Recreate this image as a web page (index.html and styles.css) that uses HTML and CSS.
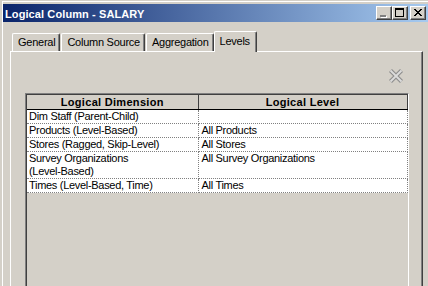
FILE: index.html
```html
<!DOCTYPE html>
<html>
<head>
<meta charset="utf-8">
<title>Logical Column - SALARY</title>
<link rel="stylesheet" href="styles.css">
</head>
<body>
<div class="window">
  <div class="titlebar">
    <span class="title">Logical Column - SALARY</span>
    <div class="caption-buttons">
      <span class="cbtn"><svg width="14" height="12" viewBox="0 0 14 12" shape-rendering="crispEdges"><rect x="4" y="9" width="6" height="2" fill="#fff"/><rect x="3" y="8" width="6" height="2" fill="#808080"/></svg></span>
      <span class="cbtn"><svg width="14" height="12" viewBox="0 0 14 12" shape-rendering="crispEdges"><rect x="2" y="1" width="9" height="2" fill="#000"/><rect x="2" y="1" width="1" height="9" fill="#000"/><rect x="10" y="1" width="1" height="9" fill="#000"/><rect x="2" y="9" width="9" height="1" fill="#000"/></svg></span>
      <span class="cbtn close"><svg width="14" height="12" viewBox="0 0 14 12" shape-rendering="crispEdges"><g fill="#000"><rect x="3" y="2" width="2" height="1"/><rect x="9" y="2" width="2" height="1"/><rect x="4" y="3" width="2" height="1"/><rect x="8" y="3" width="2" height="1"/><rect x="5" y="4" width="4" height="1"/><rect x="6" y="5" width="2" height="1"/><rect x="5" y="6" width="4" height="1"/><rect x="4" y="7" width="2" height="1"/><rect x="8" y="7" width="2" height="1"/><rect x="3" y="8" width="2" height="1"/><rect x="9" y="8" width="2" height="1"/></g></svg></span>
    </div>
  </div>
  <div class="content">
    <div class="tabs">
      <div class="tab">General</div>
      <div class="tab">Column Source</div>
      <div class="tab">Aggregation</div>
      <div class="tab active">Levels</div>
    </div>
    <div class="panel">
      <div class="toolbar">
        <svg class="delete-icon" width="16" height="16" viewBox="0 0 16 16"><path d="M2.5 2.5 L13.5 13.5 M13.5 2.5 L2.5 13.5" stroke="#8e8e8e" stroke-width="4.2"/><path d="M2.5 2.5 L13.5 13.5 M13.5 2.5 L2.5 13.5" stroke="#dcdcdc" stroke-width="1.8"/></svg>
      </div>
      <div class="frame">
        <table class="grid">
          <colgroup><col class="c1"><col class="c2"></colgroup>
          <thead>
            <tr><th>Logical Dimension</th><th>Logical Level</th></tr>
          </thead>
          <tbody>
            <tr><td>Dim Staff (Parent-Child)</td><td></td></tr>
            <tr><td>Products (Level-Based)</td><td>All Products</td></tr>
            <tr><td>Stores (Ragged, Skip-Level)</td><td>All Stores</td></tr>
            <tr><td>Survey Organizations <span class="nobr">(Level-Based)</span></td><td>All Survey Organizations</td></tr>
            <tr><td>Times (Level-Based, Time)</td><td>All Times</td></tr>
          </tbody>
        </table>
      </div>
    </div>
  </div>
</div>
</body>
</html>
```
FILE: styles.css
```css
html, body {
  margin: 0;
  padding: 0;
}
body {
  width: 428px;
  height: 286px;
  overflow: hidden;
  background: #d4d0c8;
  font-family: "Liberation Sans", Arial, sans-serif;
  font-size: 11px;
  color: #000;
}
.window {
  margin: 1px 0 0 2px;
  border-top: 1px solid #fff;
  border-left: 1px solid #fff;
  padding-top: 2px;
}
.titlebar {
  height: 18px;
  display: flex;
  align-items: center;
  padding: 0 2px 0 2px;
  background: linear-gradient(to right, #0a246a 0%, #a6caf0 100%);
}
.title {
  align-self: flex-start;
  color: #fff;
  font-weight: bold;
  font-size: 11px;
  line-height: 16px;
  padding-top: 2px;
  letter-spacing: 0.1px;
  white-space: nowrap;
}
.caption-buttons {
  margin-left: auto;
  display: flex;
}
.cbtn {
  width: 16px;
  height: 14px;
  box-sizing: border-box;
  background: #d4d0c8;
  border: 1px solid;
  border-color: #fff #404040 #404040 #fff;
  box-shadow: inset -1px -1px #808080;
}
.cbtn svg {
  display: block;
}
.cbtn.close {
  margin-left: 2px;
}
.content {
  padding: 9px 0 0 7px;
}
.tabs {
  display: flex;
  align-items: flex-end;
  padding-left: 2px;
  height: 20px;
}
.tab {
  border-top: 1px solid #fff;
  border-left: 1px solid #fff;
  border-right: 1px solid #404040;
  box-shadow: inset -1px 0 #808080;
  border-radius: 2px 2px 0 0;
  padding: 2px 4px 2px 5px;
  line-height: 13px;
  margin-right: 1px;
  letter-spacing: -0.25px;
  white-space: nowrap;
}
.tab.active {
  position: relative;
  z-index: 1;
  background: #d4d0c8;
  padding: 3px 6px 4px 5px;
  margin-bottom: -1px;
  margin-left: -1px;
  margin-right: 0;
}
.panel {
  border-top: 1px solid #fff;
  border-left: 1px solid #fff;
  border-right: 1px solid #404040;
  box-shadow: inset -1px 0 #808080;
  margin-right: 5px;
  height: 234px;
}
.toolbar {
  display: flex;
  justify-content: flex-end;
  padding: 16px 18px 9px 0;
}
.delete-icon {
  display: block;
}
.frame {
  margin: 0 13px 0 14px;
  border: 1px solid;
  border-bottom: 0;
  border-color: #808080 #fff #fff #808080;
  box-shadow: inset 1px 1px #404040;
  padding: 1px 1px 0 1px;
  height: 191px;
}
.grid {
  width: 380px;
  table-layout: fixed;
  border-collapse: collapse;
  background: #fff;
}
.c1 { width: 171px; }
.c2 { width: 209px; }
.grid th {
  background: #d4d0c8;
  font-weight: bold;
  letter-spacing: 0.3px;
  line-height: 14px;
  padding: 0;
  text-align: center;
  border-bottom: 1px solid #000;
  border-right: 1px solid #404040;
}
.grid td {
  border-bottom: 1px dotted #808080;
  border-right: 1px dotted #808080;
  padding: 0 6px 0 2px;
  line-height: 13px;
  vertical-align: top;
  letter-spacing: -0.3px;
}
.grid td + td {
  padding-left: 3px;
}
.nobr {
  white-space: nowrap;
}
```
